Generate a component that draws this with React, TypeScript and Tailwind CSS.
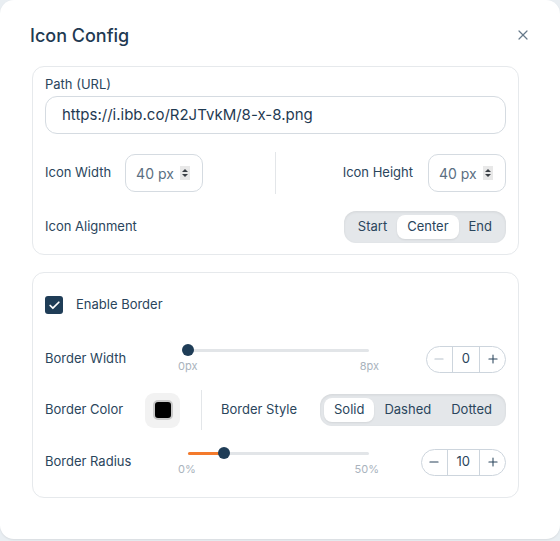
import { useState } from "react";
import { X, Minus, Plus, Check } from "lucide-react";

const label = "text-[13px] text-[#2a455c]";

function SpinInput({ value }: { value: string }) {
  return (
    <div className="flex h-[38px] w-[78px] items-center gap-[6px] rounded-[10px] border border-[#d5dbe1] pl-[10px]">
      <span className="text-[14px] text-[#5b6f82]">{value}</span>
      <span className="flex h-[14px] w-[10px] flex-col items-center justify-center gap-[2px] bg-[#e8e8e8]">
        <svg width="6" height="3" viewBox="0 0 6 3">
          <path d="M0 3 L3 0 L6 3 Z" fill="#3a3f45" />
        </svg>
        <svg width="6" height="3" viewBox="0 0 6 3">
          <path d="M0 0 L3 3 L6 0 Z" fill="#3a3f45" />
        </svg>
      </span>
    </div>
  );
}

function Segmented({ items, active }: { items: string[]; active: string }) {
  return (
    <div className="flex h-[32px] items-center rounded-[12px] bg-[#e4e7ea] p-[4px] shadow-[inset_0_1px_3px_rgba(0,0,0,0.08)]">
      {items.map((item) => (
        <div
          key={item}
          className={
            "flex h-[24px] items-center rounded-[8px] px-[10px] text-[13px] text-[#2a455c] " +
            (item === active ? "bg-white shadow-[0_1px_2px_rgba(0,0,0,0.08)]" : "")
          }
        >
          {item}
        </div>
      ))}
    </div>
  );
}

function Stepper({ value, minDisabled }: { value: number; minDisabled?: boolean }) {
  return (
    <div className="flex h-[27px] items-center rounded-full border border-[#cdd5dd]">
      <div className={"flex w-[25px] justify-center " + (minDisabled ? "text-[#b8c2cc]" : "text-[#2a455c]")}>
        <Minus size={14} strokeWidth={1.8} />
      </div>
      <div className="flex h-full items-center justify-center border-x border-[#cdd5dd] px-[9px] text-[13px] text-[#2a455c]">
        {value}
      </div>
      <div className="flex w-[25px] justify-center text-[#2a455c]">
        <Plus size={14} strokeWidth={1.8} />
      </div>
    </div>
  );
}

function Slider({ pct, min, max }: { pct: number; min: string; max: string }) {
  return (
    <div className="flex w-[181px] flex-col">
      <div className="relative h-[12px]">
        <div className="absolute left-0 right-0 top-[5px] h-[3px] rounded-full bg-[#e2e5e8]" />
        <div
          className="absolute left-0 top-[5px] h-[3px] rounded-full bg-[#f47a2c]"
          style={{ width: `${pct}%` }}
        />
        <div
          className="absolute top-0 h-[12px] w-[12px] -translate-x-1/2 rounded-full bg-[#1f3d57]"
          style={{ left: `${pct}%` }}
        />
      </div>
      <div className="-mx-[10px] mt-[2px] flex justify-between text-[11px] text-[#a9b3bd]">
        <span>{min}</span>
        <span>{max}</span>
      </div>
    </div>
  );
}

export default function App() {
  const [enabled, setEnabled] = useState(true);

  return (
    <div className="min-h-[541px] bg-[#e9eef2]" style={{ fontFamily: "Inter, 'Noto Sans', sans-serif" }}>
      <div className="flex h-[539px] flex-col rounded-[14px] bg-white px-[32px] shadow-[0_1px_2px_rgba(0,0,0,0.08)]">
        <div className="mt-[23px] flex h-[24px] items-center justify-between">
          <h1 className="-ml-[2px] text-[18px] font-medium text-[#1f3a52]">Icon Config</h1>
          <X size={16} strokeWidth={1.8} className="-mr-[3px] text-[#66798a]" />
        </div>

        <div className="mt-[19px] mr-[9px] flex flex-col rounded-[12px] border border-[#e6e9ec] px-[12px] pb-[11px] pt-[8px]">
          <span className="text-[13px] leading-[18px] text-[#2a455c]">Path (URL)</span>
          <div className="mt-[3px] flex h-[38px] items-center rounded-[12px] border border-[#d5dbe1] px-[16px] text-[15px] text-[#1f3a52]">
            https://i.ibb.co/R2JTvkM/8-x-8.png
          </div>

          <div className="mt-[18px] grid grid-cols-[1fr_1px_1fr] items-center">
            <div className="flex items-center gap-[14px]">
              <span className={label}>Icon Width</span>
              <SpinInput value="40 px" />
            </div>
            <div className="h-[42px] bg-[#e3e6e9]" />
            <div className="flex items-center justify-end gap-[15px]">
              <span className={label}>Icon Height</span>
              <SpinInput value="40 px" />
            </div>
          </div>

          <div className="mt-[17px] flex items-center justify-between">
            <span className={label}>Icon Alignment</span>
            <Segmented items={["Start", "Center", "End"]} active="Center" />
          </div>
        </div>

        <div className="mt-[17px] mr-[9px] flex flex-col rounded-[12px] border border-[#e6e9ec] px-[12px] pb-[19px] pt-[23px]">
          <label className="flex h-[18px] cursor-pointer items-center gap-[13px]">
            <span
              onClick={() => setEnabled(!enabled)}
              className="flex h-[18px] w-[18px] items-center justify-center rounded-[3px] bg-[#1f3d57] text-white"
            >
              {enabled && <Check size={13} strokeWidth={3.2} />}
            </span>
            <span className={label}>Enable Border</span>
          </label>

          <div className="mt-[29px] flex h-[32px] items-center">
            <span className={label + " w-[143px]"}>Border Width</span>
            <Slider pct={0} min="0px" max="8px" />
            <div className="flex flex-1 justify-end">
              <Stepper value={0} minDisabled />
            </div>
          </div>

          <div className="mt-[15px] flex h-[40px] items-center">
            <span className={label + " w-[100px]"}>Border Color</span>
            <div className="flex h-[35px] w-[35px] items-center justify-center rounded-[9px] bg-[#f2f2f2]">
              <div className="h-[20px] w-[20px] rounded-[5px] border-2 border-[#c9c9c9] bg-black" />
            </div>
            <div className="ml-[21px] h-[40px] w-px bg-[#e3e6e9]" />
            <span className={label + " ml-[19px]"}>Border Style</span>
            <div className="flex flex-1 justify-end">
              <Segmented items={["Solid", "Dashed", "Dotted"]} active="Solid" />
            </div>
          </div>

          <div className="mt-[16px] flex h-[32px] items-center">
            <span className={label + " w-[143px]"}>Border Radius</span>
            <Slider pct={20} min="0%" max="50%" />
            <div className="flex flex-1 justify-end">
              <Stepper value={10} />
            </div>
          </div>
        </div>
      </div>
    </div>
  );
}
